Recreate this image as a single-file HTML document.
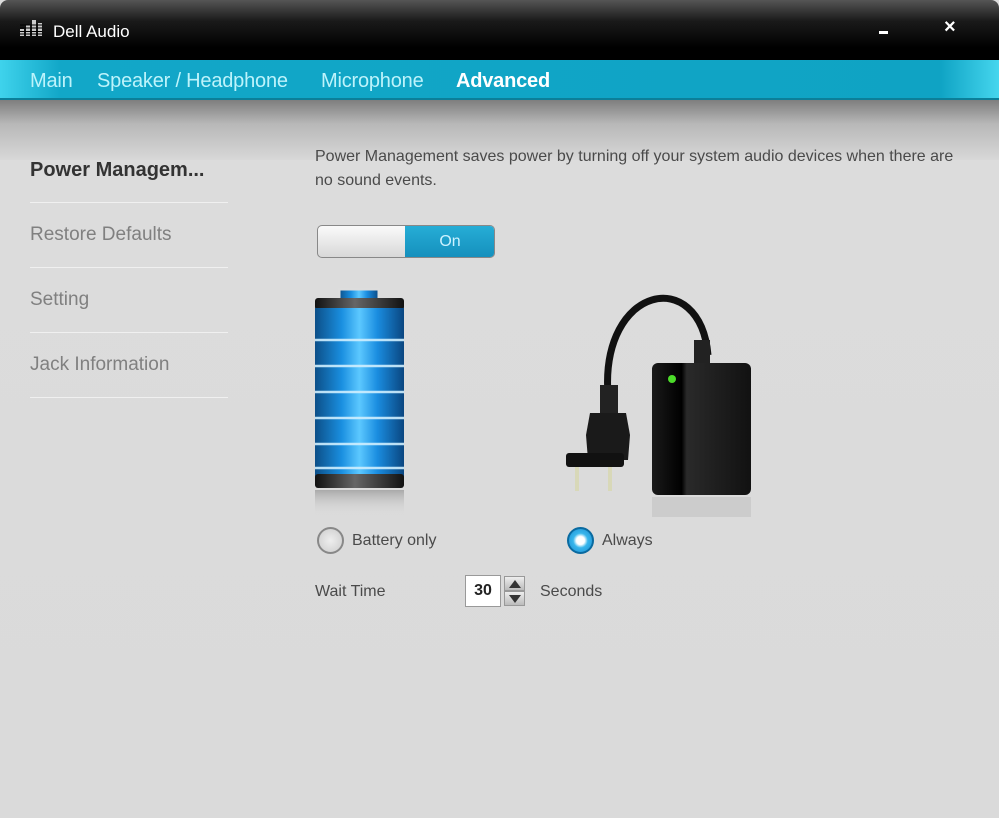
<!DOCTYPE html>
<html><head><style>
*{margin:0;padding:0;box-sizing:border-box}
body{width:999px;height:818px;overflow:hidden;background:#dcdcdc;font-family:"Liberation Sans",sans-serif;position:relative}
.abs{position:absolute}
#title{left:0;top:0;width:999px;height:60px;background:linear-gradient(#555 0%,#1a1a1a 35%,#000 80%);border-radius:8px 8px 0 0}
#tabs{left:0;top:60px;width:999px;height:40px;background:linear-gradient(90deg,#3fd3ec 0,#12a7c8 60px,#0fa3c4 940px,#45d6ee 999px);border-bottom:2px solid #0b7f99}
#tabs span{position:absolute;top:10px;font-size:20px;color:#bdf3fb;letter-spacing:-0.2px}
#shade{left:0;top:100px;width:999px;height:60px;background:linear-gradient(#7e7e7e,#b8b8b8 40%,#d8d8d8 100%)}
#main{left:0;top:160px;width:999px;height:658px;background:linear-gradient(#dcdcdc,#dadada)}
.side{position:absolute;left:30px;font-size:19px;color:#808080}
.hr{position:absolute;left:30px;width:198px;height:1px;background:#aaa;border-bottom:1px solid #f0f0f0}
.t{position:absolute;font-size:16px;color:#4a4a4a}
</style></head><body>
<div id="title" class="abs">
 <svg class="abs" style="left:20px;top:19px" width="22" height="18"><g fill="#ccc"><rect x="0" y="10" width="4" height="7"/><rect x="6" y="6" width="4" height="11"/><rect x="12" y="1" width="4" height="16"/><rect x="18" y="4" width="4" height="13"/></g><g stroke="#000" stroke-width="1"><line x1="0" y1="12.5" x2="22" y2="12.5"/><line x1="0" y1="15" x2="22" y2="15"/><line x1="0" y1="9" x2="22" y2="9"/><line x1="0" y1="6" x2="22" y2="6"/></g></svg>
 <div class="abs" style="left:53px;top:22px;color:#fff;font-size:17px">Dell Audio</div>
 <div class="abs" style="left:879px;top:31px;width:9px;height:3px;background:#fff"></div>
 <div class="abs" style="left:944px;top:16px;color:#fff;font-size:20px;font-weight:bold">×</div>
</div>
<div id="tabs" class="abs">
 <span style="left:30px">Main</span>
 <span style="left:97px">Speaker / Headphone</span>
 <span style="left:321px">Microphone</span>
 <span style="left:456px;color:#fff;font-weight:bold">Advanced</span>
</div>
<div id="shade" class="abs"></div>
<div id="main" class="abs"></div>
<div class="side" style="top:159px;color:#333;font-weight:bold;font-size:20px">Power Managem...</div>
<div class="hr" style="top:202px"></div>
<div class="side" style="top:224px">Restore Defaults</div>
<div class="hr" style="top:267px"></div>
<div class="side" style="top:289px">Setting</div>
<div class="hr" style="top:332px"></div>
<div class="side" style="top:354px">Jack Information</div>
<div class="hr" style="top:397px"></div>

<div class="t" style="left:315px;top:145px;width:650px;line-height:24px">Power Management saves power by turning off your system audio devices when there are no sound events.</div>

<div class="abs" style="left:317px;top:225px;width:178px;height:33px;border:1px solid #888;border-radius:5px;overflow:hidden;background:linear-gradient(#fafafa,#d8d8d8)">
 <div class="abs" style="left:87px;top:0;width:90px;height:31px;background:linear-gradient(#26add6,#1590bd);color:#cdf2ff;font-size:16px;text-align:center;line-height:31px">On</div>
</div>

<svg class="abs" style="left:312px;top:284px" width="96" height="236">
 <defs>
  <linearGradient id="bl" x1="0" x2="1"><stop offset="0" stop-color="#0c4f88"/><stop offset=".3" stop-color="#1a8fe0"/><stop offset=".5" stop-color="#5cc8ff"/><stop offset=".7" stop-color="#1a8de0"/><stop offset="1" stop-color="#0a4680"/></linearGradient>
  <linearGradient id="bk" x1="0" x2="1"><stop offset="0" stop-color="#111"/><stop offset=".45" stop-color="#666"/><stop offset="1" stop-color="#111"/></linearGradient>
  <linearGradient id="rf" x1="0" y1="0" x2="0" y2="1"><stop offset="0" stop-color="#888" stop-opacity=".6"/><stop offset="1" stop-color="#ddd" stop-opacity="0"/></linearGradient>
 </defs>
 <rect x="27" y="5" width="40" height="22" fill="url(#bl)" stroke="#ddd" stroke-width="3"/>
 <rect x="3" y="14" width="89" height="12" rx="3" fill="url(#bk)"/>
 <rect x="3" y="24" width="89" height="170" fill="url(#bl)"/>
 <g stroke="#cfefff" stroke-width="2.5" opacity=".9">
  <line x1="3" y1="56" x2="92" y2="56"/><line x1="3" y1="82" x2="92" y2="82"/><line x1="3" y1="108" x2="92" y2="108"/><line x1="3" y1="134" x2="92" y2="134"/><line x1="3" y1="160" x2="92" y2="160"/><line x1="3" y1="184" x2="92" y2="184"/>
 </g>
 <rect x="3" y="190" width="89" height="14" rx="3" fill="url(#bk)"/>
 <rect x="3" y="206" width="89" height="26" fill="url(#rf)"/>
</svg>

<svg class="abs" style="left:560px;top:285px" width="200" height="240">
 <defs><linearGradient id="bx" x1="0" x2="1"><stop offset="0" stop-color="#1a1a1a"/><stop offset=".3" stop-color="#000"/><stop offset=".35" stop-color="#2a2a2a"/><stop offset="1" stop-color="#111"/></linearGradient></defs>
 <path d="M48 110 C40 0 140 -20 148 70" fill="none" stroke="#111" stroke-width="7"/>
 <rect x="134" y="55" width="16" height="24" fill="#222"/>
 <rect x="92" y="78" width="99" height="132" rx="6" fill="url(#bx)"/>
 <circle cx="112" cy="94" r="4" fill="#4cdc2a"/>
 <rect x="40" y="100" width="18" height="30" fill="#222"/>
 <path d="M30 128 L66 128 L70 150 L68 175 L28 175 L26 150 Z" fill="#1a1a1a"/>
 <rect x="6" y="168" width="58" height="14" rx="3" fill="#111"/>
 <rect x="15" y="182" width="4" height="24" fill="#d8d8b8"/><rect x="48" y="182" width="4" height="24" fill="#d8d8b8"/>
 <rect x="92" y="212" width="99" height="20" fill="#aaa" opacity=".3"/>
</svg>

<div class="abs" style="left:317px;top:527px;width:27px;height:27px;border-radius:50%;border:2px solid #888;background:radial-gradient(#eee,#ccc)"></div>
<div class="t" style="left:352px;top:532px">Battery only</div>
<div class="abs" style="left:567px;top:527px;width:27px;height:27px;border-radius:50%;border:2px solid #0a6aa0;background:radial-gradient(#fff 0,#fff 25%,#38b6ec 45%,#1a8bd0 100%)"></div>
<div class="t" style="left:602px;top:532px">Always</div>

<div class="t" style="left:315px;top:583px">Wait Time</div>
<div class="abs" style="left:465px;top:575px;width:36px;height:32px;border:1px solid #999;background:#fff;font-weight:bold;font-size:16px;color:#222;text-align:center;line-height:30px">30</div>
<div class="abs" style="left:504px;top:576px;width:21px;height:15px;background:linear-gradient(#eee,#bbb);border:1px solid #999"><div class="abs" style="left:4px;top:3px;border-left:6px solid transparent;border-right:6px solid transparent;border-bottom:8px solid #333"></div></div>
<div class="abs" style="left:504px;top:591px;width:21px;height:15px;background:linear-gradient(#eee,#bbb);border:1px solid #999"><div class="abs" style="left:4px;top:3px;border-left:6px solid transparent;border-right:6px solid transparent;border-top:8px solid #333"></div></div>
<div class="t" style="left:540px;top:583px">Seconds</div>
</body></html>
